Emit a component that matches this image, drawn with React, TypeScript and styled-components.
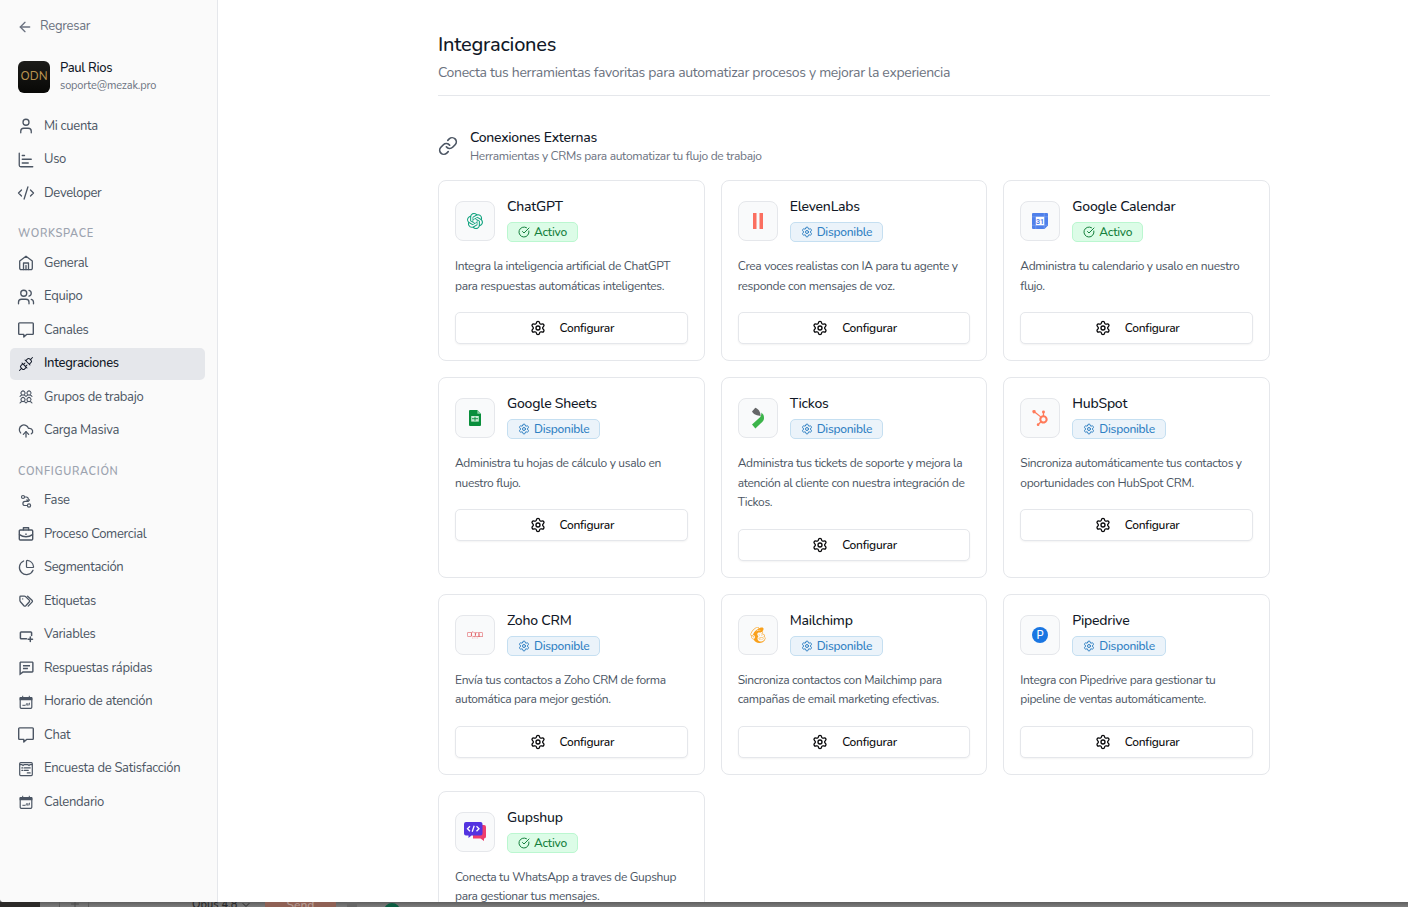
import React from 'react';
import styled, { createGlobalStyle, css } from 'styled-components';
import { ArrowLeft, User, ChartBar, CodeXml, Users, CloudUpload, ChartPie, ChevronDown, Plus, Settings, CircleCheckBig, Link } from 'lucide-react';
import { PiUsersFour, PiPlugs } from 'react-icons/pi';
import { BiCommentDetail } from 'react-icons/bi';
import { SiOpenai, SiHubspot, SiMailchimp, SiZoho } from 'react-icons/si';

const GlobalStyle = createGlobalStyle`
  *, *::before, *::after { box-sizing: border-box; }
  body {
    margin: 0;
    background: #fff;
    font-family: Nunito, Lato, "Liberation Sans", sans-serif;
    overflow: hidden;
  }
  h1, h2, h3, p { margin: 0; font-weight: 500; }
  svg { display: block; flex: none; }
`;

const Screen = styled.div`
  height: 907px;
  display: flex;
  flex-direction: column;
  background: #707070;
`;

const Window = styled.div`
  height: 902px;
  display: flex;
  overflow: hidden;
  background: #fff;
  border-bottom-left-radius: 4px;
`;

const Sidebar = styled.aside`
  width: 218px;
  flex: none;
  padding: 10px 12px 0 10px;
  background: #fafafa;
  border-right: 1px solid #e5e7eb;
  color: #4b5563;
`;

const Back = styled.a`
  display: flex;
  align-items: center;
  gap: 7px;
  height: 33px;
  padding: 0 7px;
  font-size: 13px;
  letter-spacing: -0.28px;
  color: #6b7280;
  span { margin-top: -2px; }
`;

const Profile = styled.div`
  display: flex;
  align-items: center;
  gap: 10px;
  height: 34px;
  margin: 17px 8px 16px;
`;

const Avatar = styled.div`
  width: 32px;
  height: 32px;
  display: grid;
  place-items: center;
  border-radius: 6px;
  background: linear-gradient(#1c1c1a, #080806);
`;

const UserName = styled.p`
  font-size: 13px;
  line-height: 17px;
  letter-spacing: -0.3px;
  color: #111827;
`;

const UserMail = styled.p`
  font-size: 11px;
  font-weight: 400;
  line-height: 17px;
  letter-spacing: -0.16px;
  color: #6b7280;
`;

const Nav = styled.nav`
  display: flex;
  flex-direction: column;
  gap: 1.5px;
`;

const NavItem = styled.a<{ $active?: boolean }>`
  display: flex;
  align-items: center;
  gap: 9px;
  height: 32px;
  padding: 0 7px;
  border-radius: 5px;
  font-size: 13px;
  color: #4b5563;
  ${(p) => p.$active && css`
    background: #e5e7eb;
    color: #111827;
    font-weight: 500;
  `}
`;

const NavIcon = styled.span`
  width: 18px;
  height: 18px;
  display: grid;
  place-items: center;
`;

const NavLabel = styled.span`
  margin-top: -0.5px;
  letter-spacing: -0.3px;
  white-space: nowrap;
`;

const NavHeading = styled.h3`
  height: 16px;
  margin: 15px 8px 7px;
  font-size: 11px;
  font-weight: 600;
  line-height: 19px;
  letter-spacing: 0.7px;
  text-transform: uppercase;
  color: #9ca3af;
`;

const Main = styled.main`
  flex: 1;
  padding: 32px 138px 0 220px;
`;

const PageHeader = styled.header`
  height: 64px;
  border-bottom: 1px solid #e5e7eb;
`;

const PageTitle = styled.h1`
  font-size: 20px;
  line-height: 25px;
  letter-spacing: -0.22px;
  color: #111827;
`;

const PageSubtitle = styled.p`
  margin-top: 6px;
  font-size: 14px;
  font-weight: 400;
  line-height: 20px;
  letter-spacing: -0.32px;
  white-space: nowrap;
  color: #6b7280;
`;

const Section = styled.section`
  margin-top: 32px;
`;

const SectionHead = styled.div`
  display: flex;
  align-items: flex-start;
  gap: 12px;
  height: 37px;
  margin-bottom: 15px;
  color: #4b5563;
  & > svg { margin-top: 8px; }
`;

const SectionTitle = styled.h2`
  font-size: 14px;
  line-height: 19px;
  letter-spacing: -0.27px;
  color: #111827;
`;

const SectionText = styled.p`
  font-size: 12px;
  font-weight: 400;
  line-height: 18px;
  letter-spacing: -0.32px;
  color: #6b7280;
`;

const Grid = styled.div`
  display: grid;
  grid-template-columns: repeat(3, minmax(0, 1fr));
  gap: 16px;
`;

const Card = styled.article`
  padding: 16px;
  border: 1px solid #e5e7eb;
  border-radius: 8px;
  background: #fff;
`;

const CardHead = styled.div`
  display: flex;
  align-items: center;
  gap: 12px;
  height: 48px;
`;

const LogoBox = styled.div`
  width: 40px;
  height: 40px;
  display: grid;
  place-items: center;
  border: 1px solid #e5e7eb;
  border-radius: 8px;
  background: #f9fafb;
`;

const CardInfo = styled.div`
  height: 48px;
`;

const CardTitle = styled.h3`
  font-size: 14px;
  line-height: 19px;
  letter-spacing: -0.23px;
  color: #111827;
`;

const Badge = styled.span<{ $active: boolean }>`
  display: inline-flex;
  align-items: center;
  gap: 4px;
  height: 20px;
  margin-top: 6px;
  padding: 0 10px;
  border: 1px solid ${(p) => (p.$active ? '#bbf7d0' : '#c5dff1')};
  border-radius: 5px;
  background: ${(p) => (p.$active ? '#dcfce7' : '#ebf3fa')};
  color: ${(p) => (p.$active ? '#15803d' : '#2f80c3')};
  font-size: 12px;
  font-weight: 500;
  line-height: 18px;
  letter-spacing: -0.26px;
`;

const Description = styled.p`
  min-height: 39px;
  margin: 12px 0 16px;
  font-size: 12px;
  font-weight: 400;
  line-height: 19.5px;
  letter-spacing: -0.33px;
  color: #4b5563;
`;

const Line = styled.span`
  display: block;
  white-space: nowrap;
`;

const ConfigButton = styled.button`
  display: flex;
  align-items: center;
  justify-content: center;
  gap: 14px;
  width: 100%;
  height: 32px;
  padding: 0 0 0 1px;
  border: 1px solid #e5e7eb;
  border-radius: 5px;
  background: #fff;
  box-shadow: 0 1px 2px rgba(0, 0, 0, 0.05);
  color: #09090b;
  font: 500 12px Nunito, Lato, sans-serif;
  letter-spacing: -0.25px;
`;

const Behind = styled.div`
  display: flex;
  align-items: flex-start;
  height: 5px;
  overflow: hidden;
  background: linear-gradient(#606060, #7b7b7b);
  color: #2a2a2a;
`;

const BehindBlock = styled.span<{ $w: number; $ml?: number; $bg: string }>`
  flex: none;
  width: ${(p) => p.$w}px;
  height: 5px;
  margin-left: ${(p) => p.$ml ?? 0}px;
  background: ${(p) => p.$bg};
`;

const BehindPlus = styled.span`
  flex: none;
  height: 12px;
  margin: -4px 7px 0 9px;
  color: #4a4a4a;
`;

const BehindText = styled.span<{ $w: number; $ml: number; $top: number }>`
  flex: none;
  width: ${(p) => p.$w}px;
  margin-left: ${(p) => p.$ml}px;
  margin-top: ${(p) => p.$top}px;
  font-size: 11px;
  font-weight: 600;
  line-height: 12px;
  white-space: nowrap;
`;

const BehindChevron = styled.span`
  flex: none;
  margin-top: -3px;
`;

const BehindButton = styled.span`
  flex: none;
  display: flex;
  justify-content: center;
  width: 71px;
  height: 5px;
  margin-left: 13px;
  background: #8f6155;
  color: #b39a92;
  font-size: 12px;
  font-weight: 600;
  line-height: 6px;
`;

const BehindDot = styled.span`
  flex: none;
  width: 16px;
  height: 16px;
  margin: 1px 0 0 27px;
  border-radius: 50%;
  background: #0b5c41;
`;

const stroke = { fill: 'none', stroke: 'currentColor', strokeWidth: 1.3, strokeLinecap: 'round', strokeLinejoin: 'round' } as const;

const HomeIcon = () => (
  <svg width="16" height="16" viewBox="0 0 16 16" {...stroke}>
    <path d="M1.700 6 8 1.200 14.300 6v7.300a1.400 1.400 0 0 1-1.400 1.400H3.100a1.400 1.400 0 0 1-1.400-1.400z" />
    <path d="M5.500 14.500V8h5v6.500M8 10.500v4" />
  </svg>
);
const ChatIcon = () => (
  <svg width="16" height="16" viewBox="0 0 16 16" {...stroke} strokeWidth={1.4}>
    <path d="M1.500.9h13a.8.8 0 0 1 .8.8v9.900a.8.8 0 0 1-.8.8H8.600L5.800 15v-2.600H1.500a.8.8 0 0 1-.8-.8V1.700a.8.8 0 0 1 .8-.8z" />
  </svg>
);
const PhaseIcon = () => (
  <svg width="16" height="16" viewBox="0 0 16 16" {...stroke} strokeWidth={1.2}>
    <circle cx="5" cy="4" r="1.500" />
    <circle cx="11" cy="12.500" r="1.600" />
    <path d="M6.600 4h1.700a2.100 2.100 0 0 1 2 2.300M10.300 8.300H7a2.100 2.100 0 0 0 0 4.200h2.300M8.800 6.900l1.500 1.400 1.200-1.500" />
  </svg>
);
const BriefcaseIcon = () => (
  <svg width="16" height="16" viewBox="0 0 16 16" {...stroke} strokeWidth={1.400}>
    <rect x="1.300" y="4" width="13.400" height="10" rx="1" />
    <path d="M5.400 3.800V1.800h5.200v2M1.500 8.600c2 1.500 4.200 2.200 6.500 2.200s4.500-.7 6.500-2.200M8 8v.4" />
  </svg>
);
const TagsIcon = () => (
  <svg width="16" height="16" viewBox="0 0 16 16" {...stroke} strokeWidth={1.300}>
    <path d="M1.900 3.900c0-.5.300-.8.800-.8h3.700c.4 0 .8.200 1.100.4l3.700 3.600c.6.600.6 1.300 0 1.900l-3.400 3.700c-.6.600-1.300.6-1.900 0L2.400 8.700c-.3-.3-.5-.7-.5-1.100z" />
    <path d="M9.600 3.200l4.400 4c.6.600.6 1.300 0 1.900l-3.800 4M4.700 5.800v.100" />
  </svg>
);
const VariableIcon = () => (
  <svg width="16" height="16" viewBox="0 0 16 16" {...stroke} strokeWidth={1.5}>
    <path d="M8.500 11.800H3.200a.8.8 0 0 1-.8-.8V5.800a.8.8 0 0 1 .8-.8h9.600a.8.8 0 0 1 .8.8v2.800M12.300 10v4.400M10.100 12.200h4.400" />
  </svg>
);
const ScheduleIcon = () => (
  <svg width="16" height="16" viewBox="0 0 16 16" {...stroke} strokeWidth={1.2}>
    <path d="M3.200 3.500h9.600a1 1 0 0 1 1 1v8.800a1 1 0 0 1-1 1H3.200a1 1 0 0 1-1-1V4.500a1 1 0 0 1 1-1z" />
    <path d="M2.200 3.700h11.600v2H2.200z" fill="currentColor" />
    <path d="M4.700 2.200v2M11.300 2.200v2M4.800 11.300h2M8 11.300l.4-1.500M9.800 11.300V9.600M11.400 9.200l-.3 1.800" strokeWidth="1" />
  </svg>
);
const SurveyIcon = () => (
  <svg width="16" height="16" viewBox="0 0 16 16" {...stroke} strokeWidth={1.200}>
    <rect x="1.700" y="1.700" width="12.600" height="12.900" rx="1" />
    <path d="M2 3.600h2l1 1 1.300-1h3.400l1.300 1 1-1h2M3.800 6.900h1M6.300 6.900h5.900M3.800 9.300h1M6.300 9.300h4M9.300 11.900h2.900" />
  </svg>
);

const ic = { size: 18, strokeWidth: 1.75 };

type Item = { label: string; icon: React.ReactNode; active?: boolean };

const account: Item[] = [
  { label: 'Mi cuenta', icon: <User {...ic} /> },
  { label: 'Uso', icon: <ChartBar {...ic} /> },
  { label: 'Developer', icon: <CodeXml {...ic} /> },
];
const workspace: Item[] = [
  { label: 'General', icon: <HomeIcon /> },
  { label: 'Equipo', icon: <Users {...ic} /> },
  { label: 'Canales', icon: <ChatIcon /> },
  { label: 'Integraciones', icon: <PiPlugs size={16} />, active: true },
  { label: 'Grupos de trabajo', icon: <PiUsersFour size={16} /> },
  { label: 'Carga Masiva', icon: <CloudUpload size={16} strokeWidth={1.900} /> },
];
const settings: Item[] = [
  { label: 'Fase', icon: <PhaseIcon /> },
  { label: 'Proceso Comercial', icon: <BriefcaseIcon /> },
  { label: 'Segmentación', icon: <ChartPie size={17} strokeWidth={1.750} /> },
  { label: 'Etiquetas', icon: <TagsIcon /> },
  { label: 'Variables', icon: <VariableIcon /> },
  { label: 'Respuestas rápidas', icon: <BiCommentDetail size={17} /> },
  { label: 'Horario de atención', icon: <ScheduleIcon /> },
  { label: 'Chat', icon: <ChatIcon /> },
  { label: 'Encuesta de Satisfacción', icon: <SurveyIcon /> },
  { label: 'Calendario', icon: <ScheduleIcon /> },
];

const ElevenLogo = () => (
  <svg width="16" height="16" viewBox="0 0 16 16" fill="#fb6f60"><path d="M3 0h3.500v16H3zM9.500 0H13v16H9.500z" /></svg>
);
const CalendarLogo = () => (
  <svg width="16" height="16" viewBox="0 0 16 16">
    <path d="M1 0h14a1 1 0 0 1 1 1v11.500L12.500 16H1a1 1 0 0 1-1-1V1a1 1 0 0 1 1-1z" fill="#4f80ea" />
    <path d="M0 3.800h16M12.200 0v16M3.800 12.200v3.800M0 12.200h16" stroke="#8fb0f5" strokeWidth=".5" />
    <path d="M3.800 3.800h8.400v8.400H3.800z" fill="#fff" />
    <text x="8" y="10.700" textAnchor="middle" fontSize="7" fontWeight="700" fontFamily="Roboto, sans-serif" fill="#4f80ea">31</text>
  </svg>
);
const SheetsLogo = () => (
  <svg width="16" height="16" viewBox="0 0 16 16">
    <path d="M3 0h7.300L14 3.800V15a1 1 0 0 1-1 1H3a1 1 0 0 1-1-1V1a1 1 0 0 1 1-1z" fill="#0a8f3c" />
    <path d="M10.300 0 14 3.800h-3.700z" fill="#8ccfa3" />
    <path d="M4.200 6h7.600v5.600H4.200z" fill="#c9ebd4" />
    <path d="M5 8.700h6M8 6.800v4" stroke="#0a8f3c" strokeWidth=".9" />
  </svg>
);
const TickosLogo = () => (
  <svg width="24" height="24" viewBox="0 0 24 24">
    <path d="M6 5.500 9.300 1.800c3.200 1.500 5 3.400 5.300 8.200C11.500 9.700 7.500 8.500 6 5.500z" fill="#666769" />
    <path d="M14.300 11c1-1.500 1.200-3 1-4.500 2.200 1.800 3 3.700 2.600 6.500-.3 1.700-1.500 2.900-2.800 4.100L9.400 22.500 6 18.600z" fill="#3cb44a" />
  </svg>
);
const PipedriveLogo = () => (
  <svg width="16" height="16" viewBox="0 0 16 16">
    <circle cx="8" cy="8" r="8" fill="#1a76e2" />
    <text x="8.100" y="11.800" textAnchor="middle" fontSize="11" fontWeight="600" fontFamily="Nunito, Lato, sans-serif" fill="#fff">P</text>
  </svg>
);
const GupshupLogo = () => (
  <svg width="24" height="24" viewBox="0 0 24 24">
    <path d="M10 5h11a2 2 0 0 1 2 2v9.500a2 2 0 0 1-2 2V21l-3.500-2.500H10z" fill="#ee3d6d" />
    <path d="M3 2h14.500a2 2 0 0 1 2 2v9.500a2 2 0 0 1-2 2H8.500l-3 2.500v-2.500H3a2 2 0 0 1-2-2V4a2 2 0 0 1 2-2z" fill="#5333e0" />
    <path d="M7 6.300 4.500 8.800 7 11.300M13.500 6.300 16 8.800l-2.500 2.500M11.200 5.800l-2 6" fill="none" stroke="#fff" strokeWidth="1.300" />
  </svg>
);

type Integration = { name: string; logo: React.ReactNode; active?: boolean; lines: string[] };

const integrations: Integration[] = [
  { name: 'ChatGPT', logo: <SiOpenai size={16} color="#12a37f" />, active: true, lines: ['Integra la inteligencia artificial de ChatGPT', 'para respuestas automáticas inteligentes.'] },
  { name: 'ElevenLabs', logo: <ElevenLogo />, lines: ['Crea voces realistas con IA para tu agente y', 'responde con mensajes de voz.'] },
  { name: 'Google Calendar', logo: <CalendarLogo />, active: true, lines: ['Administra tu calendario y usalo en nuestro', 'flujo.'] },
  { name: 'Google Sheets', logo: <SheetsLogo />, lines: ['Administra tu hojas de cálculo y usalo en', 'nuestro flujo.'] },
  { name: 'Tickos', logo: <TickosLogo />, lines: ['Administra tus tickets de soporte y mejora la', 'atención al cliente con nuestra integración de', 'Tickos.'] },
  { name: 'HubSpot', logo: <SiHubspot size={16} color="#ff7a59" />, lines: ['Sincroniza automáticamente tus contactos y', 'oportunidades con HubSpot CRM.'] },
  { name: 'Zoho CRM', logo: <SiZoho size={16} color="#dc3f45" />, lines: ['Envía tus contactos a Zoho CRM de forma', 'automática para mejor gestión.'] },
  { name: 'Mailchimp', logo: <SiMailchimp size={16} color="#f9a01b" />, lines: ['Sincroniza contactos con Mailchimp para', 'campañas de email marketing efectivas.'] },
  { name: 'Pipedrive', logo: <PipedriveLogo />, lines: ['Integra con Pipedrive para gestionar tu', 'pipeline de ventas automáticamente.'] },
  { name: 'Gupshup', logo: <GupshupLogo />, active: true, lines: ['Conecta tu WhatsApp a traves de Gupshup', 'para gestionar tus mensajes.'] },
];

const NavList = ({ items }: { items: Item[] }) => (
  <Nav>
    {items.map((item) => (
      <NavItem key={item.label} $active={item.active}>
        <NavIcon>{item.icon}</NavIcon>
        <NavLabel>{item.label}</NavLabel>
      </NavItem>
    ))}
  </Nav>
);

export default function App() {
  return (
    <>
      <GlobalStyle />
      <Screen>
        <Window>
          <Sidebar>
            <Back><ArrowLeft size={16} strokeWidth={2} /><span>Regresar</span></Back>
            <Profile>
              <Avatar>
                <svg width="28" height="12" viewBox="0 0 28 12">
                  <text x="14" y="9" textAnchor="middle" textLength="27" lengthAdjust="spacingAndGlyphs" fontSize="11.500" fontWeight="500" fontFamily="Nunito, Lato, sans-serif" fill="#b8924f">ODN</text>
                </svg>
              </Avatar>
              <div>
                <UserName>Paul Rios</UserName>
                <UserMail>soporte@mezak.pro</UserMail>
              </div>
            </Profile>
            <NavList items={account} />
            <NavHeading>Workspace</NavHeading>
            <NavList items={workspace} />
            <NavHeading>Configuración</NavHeading>
            <NavList items={settings} />
          </Sidebar>
          <Main>
            <PageHeader>
              <PageTitle>Integraciones</PageTitle>
              <PageSubtitle>Conecta tus herramientas favoritas para automatizar procesos y mejorar la experiencia</PageSubtitle>
            </PageHeader>
            <Section>
              <SectionHead>
                <Link size={20} strokeWidth={2} />
                <div>
                  <SectionTitle>Conexiones Externas</SectionTitle>
                  <SectionText>Herramientas y CRMs para automatizar tu flujo de trabajo</SectionText>
                </div>
              </SectionHead>
              <Grid>
                {integrations.map((it) => (
                  <Card key={it.name}>
                    <CardHead>
                      <LogoBox>{it.logo}</LogoBox>
                      <CardInfo>
                        <CardTitle>{it.name}</CardTitle>
                        <Badge $active={!!it.active}>
                          {it.active ? <CircleCheckBig size={12} /> : <Settings size={12} />}
                          {it.active ? 'Activo' : 'Disponible'}
                        </Badge>
                      </CardInfo>
                    </CardHead>
                    <Description>
                      {it.lines.map((l) => <Line key={l}>{l}</Line>)}
                    </Description>
                    <ConfigButton><Settings size={16} />Configurar</ConfigButton>
                  </Card>
                ))}
              </Grid>
            </Section>
          </Main>
        </Window>
        <Behind>
          <BehindBlock $w={40} $bg="#2c2a28" />
          <BehindBlock $w={1} $ml={19} $bg="#5a5a5a" />
          <BehindPlus><Plus size={12} /></BehindPlus>
          <BehindBlock $w={1} $bg="#5a5a5a" />
          <BehindText $w={48} $ml={103} $top={-3}>Opus 4.8</BehindText>
          <BehindChevron><ChevronDown size={12} /></BehindChevron>
          <BehindButton>Send</BehindButton>
          <BehindBlock $w={10} $ml={11} $bg="#666" />
          <BehindDot />
        </Behind>
      </Screen>
    </>
  );
}
